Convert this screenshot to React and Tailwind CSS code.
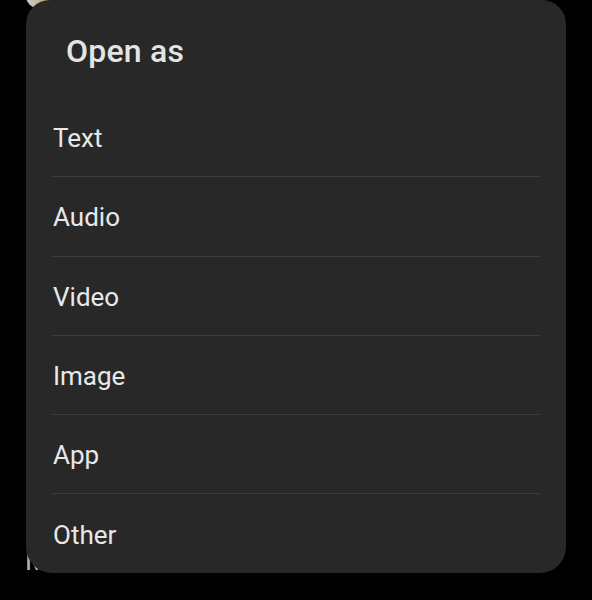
import React from 'react';

const options = ['Text', 'Audio', 'Video', 'Image', 'App', 'Other'];

const App = () => {
    return (
        <div className="w-full h-[600px] bg-black font-['Roboto',sans-serif]">
            <div className="relative ml-[26px] w-[540px] h-[573px] overflow-hidden">
                {/* bits of the page showing behind the dialog corners */}
                <div className="absolute left-0 top-[-16px] w-[40px] h-[24px] rounded-full bg-gradient-to-r from-[#cfcfcf] via-[#bba878] to-[#a08236]" />
                <span className="absolute left-[-1px] top-[548px] text-[27px] leading-none text-[#b5b5b5]">M</span>

                <div className="relative h-full bg-[#282828] rounded-t-[24px] rounded-b-[26px] flex flex-col">
                    <div className="h-[98px] flex items-center pl-[40px] pt-[3px]">
                        <h1 className="text-[32px] font-medium text-[#e4e4e4] tracking-[0.2px]">Open as</h1>
                    </div>
                    {options.map((name, i) => (
                        <React.Fragment key={name}>
                            {i > 0 && <div className="h-px mx-[26px] bg-[#3c3c3c]" />}
                            <div className="h-[78.3px] flex items-center pl-[27px] pt-[3px]">
                                <span className="text-[26px] text-[#e8e8e8]">{name}</span>
                            </div>
                        </React.Fragment>
                    ))}
                </div>
            </div>
        </div>
    );
};

export default App;
